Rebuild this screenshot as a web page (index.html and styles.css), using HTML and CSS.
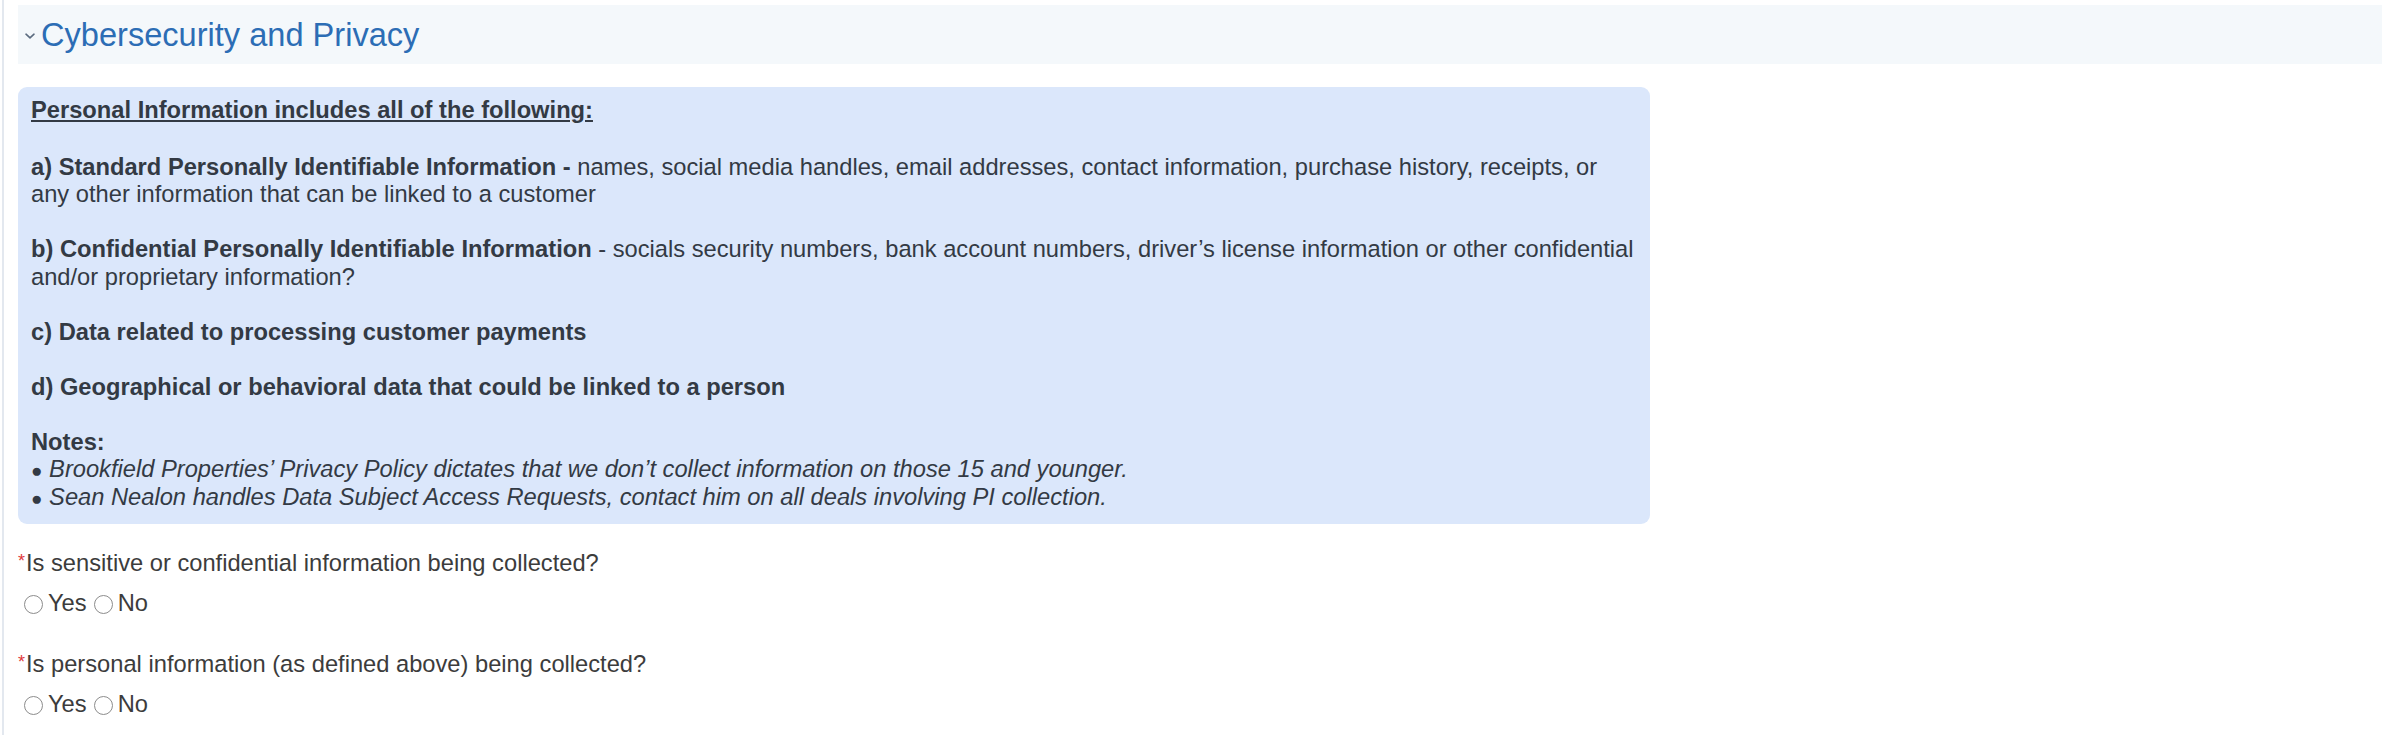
FILE: index.html
```html
<!DOCTYPE html>
<html lang="en">
<head>
<meta charset="utf-8">
<title>Cybersecurity and Privacy</title>
<link rel="stylesheet" href="styles.css">
</head>
<body>
<div class="page">
  <div class="section-header">
    <svg class="chevron" width="12" height="8" viewBox="0 0 12 8" aria-hidden="true"><path d="M2 2.2 L6 5.8 L10 2.2" fill="none" stroke="#5b6b7f" stroke-width="1.6" stroke-linecap="round" stroke-linejoin="round"/></svg>
    <h2 class="section-title">Cybersecurity and Privacy</h2>
  </div>

  <div class="info-box">
    <p class="info-heading">Personal Information includes all of the following:</p>
    <p><b>a) Standard Personally Identifiable Information -</b> names, social media handles, email addresses, contact information, purchase history, receipts, or any other information that can be linked to a customer</p>
    <p><b>b) Confidential Personally Identifiable Information</b> - socials security numbers, bank account numbers, driver’s license information or other confidential and/or proprietary information?</p>
    <p><b>c) Data related to processing customer payments</b></p>
    <p><b>d) Geographical or behavioral data that could be linked to a person</b></p>
    <p class="notes"><b>Notes:</b><br>
      <span class="bullet">●</span> <i>Brookfield Properties’ Privacy Policy dictates that we don’t collect information on those 15 and younger.</i><br>
      <span class="bullet">●</span> <i>Sean Nealon handles Data Subject Access Requests, contact him on all deals involving PI collection.</i></p>
  </div>

  <div class="question">
    <div class="question-label"><span class="req">*</span>Is sensitive or confidential information being collected?</div>
    <div class="radio-row">
      <label class="radio"><input type="radio" name="q1"><span>Yes</span></label>
      <label class="radio"><input type="radio" name="q1"><span>No</span></label>
    </div>
  </div>

  <div class="question">
    <div class="question-label"><span class="req">*</span>Is personal information (as defined above) being collected?</div>
    <div class="radio-row">
      <label class="radio"><input type="radio" name="q2"><span>Yes</span></label>
      <label class="radio"><input type="radio" name="q2"><span>No</span></label>
    </div>
  </div>
</div>
</body>
</html>
```

FILE: styles.css
```css
html, body {
  margin: 0;
  padding: 0;
  background: #ffffff;
}

body {
  font-family: "Liberation Sans", Arial, Helvetica, sans-serif;
  color: #333;
}

.page {
  margin-left: 2px;
  border-left: 2px solid #e3e8ef;
  min-height: 735px;
  box-sizing: border-box;
  padding: 5px 9px 0 14px;
}

.section-header {
  height: 59px;
  background: #f4f8fb;
  display: flex;
  align-items: center;
  padding-left: 6px;
  gap: 5px;
}

.chevron {
  display: block;
  margin-top: 2px;
}

.section-title {
  margin: 0;
  font-weight: normal;
  font-size: 32.6px;
  color: #2c6db5;
  letter-spacing: 0;
}

.info-box {
  margin-top: 23px;
  width: 1632px;
  box-sizing: border-box;
  background: #dbe7fb;
  border-radius: 9px;
  padding: 10px 11px 13px 13px;
  font-size: 23.7px;
  line-height: 27.5px;
  color: #333a44;
}

.info-box p {
  margin: 0 0 27.5px 0;
}

.info-box p.info-heading {
  font-weight: bold;
  text-decoration: underline;
  margin-bottom: 29px;
}

.info-box p.notes {
  margin-bottom: 0;
}

.bullet {
  font-style: normal;
  font-size: 19px;
  line-height: 0;
}

.question {
  margin-top: 26px;
  font-size: 23.7px;
  line-height: 27.5px;
  color: #3c3c3c;
}

.question + .question {
  margin-top: 34px;
}

.question-label {
  display: flex;
  align-items: flex-start;
}

.req {
  color: #e0383a;
  font-size: 18px;
  line-height: 22px;
  margin-right: 1px;
}

.radio-row {
  margin-top: 12px;
  padding-left: 6px;
  display: flex;
  align-items: center;
  gap: 7px;
}

.radio {
  display: flex;
  align-items: center;
  gap: 5px;
}

.radio input {
  appearance: none;
  -webkit-appearance: none;
  margin: 3px 0 0 0;
  width: 19px;
  height: 19px;
  border-radius: 50%;
  border: 1.5px solid #8c8c8c;
  background: #ffffff;
  box-sizing: border-box;
  flex: none;
}
```
